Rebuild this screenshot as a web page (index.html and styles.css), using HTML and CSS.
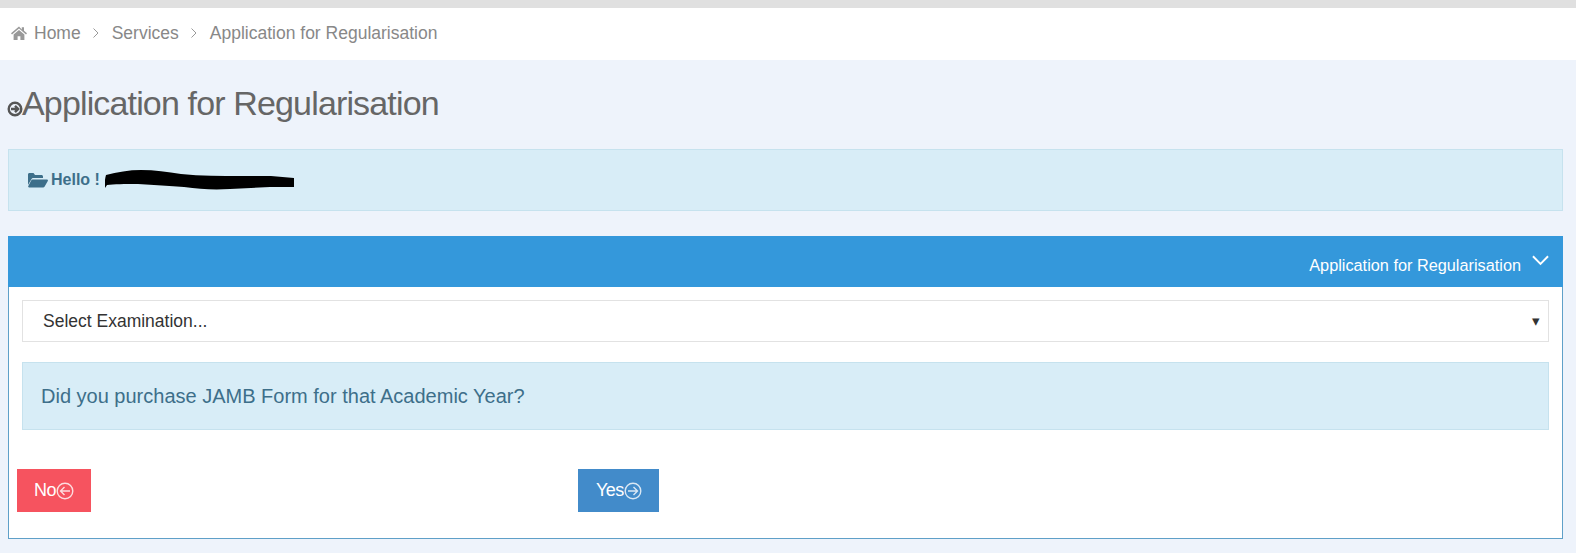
FILE: index.html
```html
<!DOCTYPE html>
<html lang="en">
<head>
    <meta charset="UTF-8">
    <meta name="viewport" content="width=device-width, initial-scale=1.0">
    <title>Application for Regularisation</title>
    <link rel="stylesheet" href="styles.css">
</head>
<body>

    <!-- breadcrumb -->
    <nav class="breadcrumb">
        <svg class="home-icon" viewBox="0 0 16 14"><path d="M8 .6 0 7.300l1 1.100L8 2.600l7 5.800 1-1.100-3-2.500V1.200h-2.200v2.300zM2.600 8.600V14h4v-3.800h2.800V14h4V8.600L8 4.100z"/></svg>
        <span>Home</span>
        <svg class="crumb-sep" viewBox="0 0 8 12"><path d="M1.500 1.500 6 6l-4.500 4.500"/></svg>
        <span>Services</span>
        <svg class="crumb-sep" viewBox="0 0 8 12"><path d="M1.500 1.500 6 6l-4.500 4.500"/></svg>
        <span>Application for Regularisation</span>
    </nav>

    <main class="content">
        <h1 class="page-title">
            <svg class="title-icon" viewBox="0 0 16 16"><circle cx="8" cy="8" r="6.300"/><path d="M4 8h7M8 4.800 11.200 8 8 11.200"/></svg>Application for Regularisation
        </h1>

        <div class="alert alert-hello">
            <svg class="folder-icon" viewBox="0 0 20 16"><path d="M0 13V2.500C0 1.500.7 1 1.500 1h4L7 3h6.500c.8 0 1.500.6 1.500 1.500V6H5.500C4.500 6 3.800 6.500 3.400 7.300zM4.500 7.500H19c.8 0 1.200.7.800 1.400l-3.300 5.800c-.3.500-.8.800-1.300.8H1c-.7 0-1.100-.7-.8-1.300l3-5.800c.3-.6.800-.9 1.300-.9z"/></svg>
            <span>Hello !</span>
            <svg class="scribble" viewBox="0 0 190 20"><path d="M1 5C12 2 24 0 36 0c14 0 26 2 40 4 20 2 40 2 60 2h30l23 2v9l-24 0-40 2c-18 1-30 0-46-2-14-1-30-2-46-3-14 0-24 0-31 1l-2 3-2-2C0 13 0 8 1 5z"/></svg>
        </div>

        <section class="panel">
            <div class="panel-heading">
                <span class="panel-title">Application for Regularisation</span>
                <svg class="chevron" viewBox="0 0 18 11"><path d="M1 1l8 8 8-8"/></svg>
            </div>
            <div class="panel-body">
                <div class="select-box">
                    <span>Select Examination...</span>
                    <span class="select-arrow">&#9662;</span>
                </div>
                <div class="alert alert-question">Did you purchase JAMB Form for that Academic Year?</div>
                <div class="actions">
                    <a class="btn btn-no">No<svg class="btn-icon" viewBox="0 0 18 18"><circle cx="9" cy="9" r="7.800"/><path d="M14 9H4.500M8.500 5l-4 4 4 4"/></svg></a>
                    <a class="btn btn-yes">Yes<svg class="btn-icon" viewBox="0 0 18 18"><circle cx="9" cy="9" r="7.800"/><path d="M4 9h9.500M9.500 5l4 4-4 4"/></svg></a>
                </div>
            </div>
        </section>
    </main>

</body>
</html>
```

FILE: styles.css
```css
/* page */
html, body {
    height: 100%;
}

body {
    margin: 0;
    font-family: "Liberation Sans", Arial, sans-serif;
    background-color: #eef3fb;
    border-top: 8px solid #e0e0e0;
    box-sizing: border-box;
    overflow: hidden;
}

/* breadcrumb */
.breadcrumb {
    display: flex;
    align-items: center;
    box-sizing: border-box;
    height: 52px;
    padding: 0 0 2px 11px;
    background-color: #ffffff;
    color: #888888;
    font-size: 17.5px;
}

.home-icon {
    width: 16px;
    height: 14px;
    margin-right: 7px;
    fill: #999999;
}

.crumb-sep {
    width: 8px;
    height: 12px;
    margin: 0 12px 0 11px;
    fill: none;
    stroke: #999999;
    stroke-width: 1;
}

/* title */
.content {
    padding: 0 13px 0 8px;
}

.page-title {
    display: flex;
    align-items: center;
    box-sizing: border-box;
    height: 89px;
    margin: 0;
    padding-bottom: 2px;
    color: #666666;
    font-size: 34px;
    font-weight: 400;
    letter-spacing: -0.85px;
}

.title-icon {
    width: 16px;
    height: 16px;
    margin: 10px -1px 0 -1px;
    fill: none;
    stroke: #555555;
    stroke-width: 2.4;
}

/* alerts */
.alert {
    box-sizing: border-box;
    background-color: #d8edf7;
    border: 1px solid #c6e2ee;
    color: #3d6f8a;
}

.alert-hello {
    display: flex;
    align-items: center;
    height: 62px;
    padding-left: 19px;
    font-size: 16px;
    font-weight: 700;
}

.folder-icon {
    width: 20px;
    height: 16px;
    margin-right: 3px;
    fill: #3d6f8a;
}

.scribble {
    width: 190px;
    height: 20px;
    margin-left: 5px;
    fill: #000000;
}

/* panel */
.panel {
    box-sizing: border-box;
    height: 303px;
    margin-top: 25px;
    background-color: #ffffff;
    border: 1px solid #5fa0c8;
}

.panel-heading {
    display: flex;
    align-items: center;
    justify-content: flex-end;
    height: 50px;
    margin: -1px -1px 0;
    padding: 1px 14px 0 0;
    background-color: #3498db;
    color: #ffffff;
    font-size: 16.3px;
}

.panel-title {
    padding-top: 7px;
}

.chevron {
    width: 17px;
    height: 11px;
    margin: -4px 0 0 11px;
    fill: none;
    stroke: #ffffff;
    stroke-width: 2;
}

.panel-body {
    padding: 13px 13px 0;
}

.select-box {
    display: flex;
    align-items: center;
    justify-content: space-between;
    box-sizing: border-box;
    height: 42px;
    padding: 0 8px 0 20px;
    border: 1px solid #e2e2e2;
    color: #333333;
    font-size: 17.5px;
}

.select-arrow {
    font-size: 15px;
    color: #333333;
}

.alert-question {
    display: flex;
    align-items: center;
    height: 68px;
    margin-top: 20px;
    padding-left: 18px;
    font-size: 20px;
}

/* buttons */
.actions {
    display: flex;
    margin: 39px 0 0 -5px;
}

.btn {
    display: flex;
    align-items: center;
    box-sizing: border-box;
    height: 43px;
    color: #ffffff;
    font-size: 18px;
    letter-spacing: -0.5px;
}

.btn-no {
    width: 74px;
    padding-left: 17px;
    background-color: #f6535f;
}

.btn-yes {
    width: 81px;
    margin-left: 487px;
    padding-left: 18px;
    background-color: #428bca;
}

.btn-icon {
    width: 18px;
    height: 18px;
    fill: none;
    stroke: #ffffff;
    stroke-width: 1.4;
    opacity: 0.8;
}
```
